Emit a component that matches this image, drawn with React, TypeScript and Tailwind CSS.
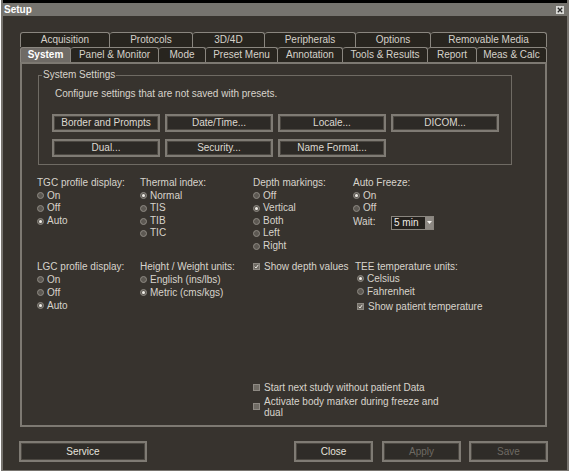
import React from "react";

type TabDef = { label: string; w: string; active?: boolean };

const row1: TabDef[] = [
  { label: "Acquisition", w: "w-[90px]" },
  { label: "Protocols", w: "w-[83px]" },
  { label: "3D/4D", w: "w-[72px]" },
  { label: "Peripherals", w: "w-[91px]" },
  { label: "Options", w: "w-[75px]" },
  { label: "Removable Media", w: "w-[116px]" },
];

const row2: TabDef[] = [
  { label: "System", w: "w-[51px]", active: true },
  { label: "Panel & Monitor", w: "w-[88px]" },
  { label: "Mode", w: "w-[47px]" },
  { label: "Preset Menu", w: "w-[72px]" },
  { label: "Annotation", w: "w-[65px]" },
  { label: "Tools & Results", w: "w-[85px]" },
  { label: "Report", w: "w-[49px]" },
  { label: "Meas & Calc", w: "w-[70px]" },
];

function Tab({ t, first }: { t: TabDef; first: boolean }) {
  return (
    <div
      className={`${t.w} h-[15px] flex items-center justify-center border-t border-r border-[#8a867f] rounded-t-[3px] ${
        first ? "border-l" : ""
      } ${t.active ? "bg-[#6f6b66] text-white font-bold" : "bg-[#28251f] text-[#d6d2ca]"}`}
    >
      {t.label}
    </div>
  );
}

function Radio({ on }: { on?: boolean }) {
  return (
    <span className="inline-flex w-[7px] h-[7px] shrink-0 rounded-full bg-[#5c5852] border border-[#8e8a83] items-center justify-center">
      {on && <span className="w-[3px] h-[3px] rounded-full bg-[#f2efe9]" />}
    </span>
  );
}

function Check({ on }: { on?: boolean }) {
  return (
    <span className="inline-flex w-[7px] h-[7px] shrink-0 bg-[#6f6b64] border border-[#8e8a83] items-center justify-center">
      {on && (
        <svg width="7" height="7" viewBox="0 0 7 7" className="block">
          <path d="M1 3.8 L2.8 5.6 L6 1.2" stroke="#f4f1ec" strokeWidth="1.3" fill="none" />
        </svg>
      )}
    </span>
  );
}

function RItem({ label, on, h = "h-[12.6px]" }: { label: string; on?: boolean; h?: string }) {
  return (
    <div className={`${h} flex items-center gap-[3px]`}>
      <Radio on={on} />
      <span>{label}</span>
    </div>
  );
}

function CItem({ label, on, h = "h-[12.6px]" }: { label: string; on?: boolean; h?: string }) {
  return (
    <div className={`${h} flex items-center gap-[4px]`}>
      <Check on={on} />
      <span className="whitespace-nowrap">{label}</span>
    </div>
  );
}

function Btn({ label }: { label: string }) {
  return (
    <div className="h-[18px] flex items-center justify-center border-2 border-[#7f7b74] bg-[#2d2a26] text-[#ddd9d1] shadow-[inset_0_0_0_1px_#4c4842]">
      {label}
    </div>
  );
}

function BigBtn({ label, w, dim }: { label: string; w: string; dim?: boolean }) {
  return (
    <div
      className={`${w} h-[21px] flex items-center justify-center border-2 border-[#7f7b74] bg-[#2f2c28] shadow-[inset_0_0_0_1px_#4c4842] ${
        dim ? "text-[#6e6a63]" : "text-[#e6e3dd]"
      }`}
    >
      {label}
    </div>
  );
}

export default function App() {
  return (
    <div className="w-[570px] h-[474px] bg-white font-['Liberation_Sans',Arial,sans-serif] text-[10px] text-[#d8d4cc] leading-[12px]">
      <div className="ml-[1px] w-[568px] h-[471px] bg-[#37332e] border-l-2 border-r-2 border-b border-[#77746f] flex flex-col">
        <div className="h-[3px] bg-black shrink-0" />
        <div className="h-[13px] shrink-0 bg-[#76746f] flex items-center justify-between pl-[1px] pr-[3px]">
          <span className="font-bold text-white leading-[13px]">Setup</span>
          <span className="w-[8px] h-[8px] bg-[#d9d9d6] flex items-center justify-center">
            <svg width="6" height="6" viewBox="0 0 6 6" className="block">
              <path d="M0.8 0.8 L5.2 5.2 M5.2 0.8 L0.8 5.2" stroke="#2a2a2a" strokeWidth="1.3" />
            </svg>
          </span>
        </div>

        {/* Tabs */}
        <div className="ml-[17px] mt-[16px] flex">
          {row1.map((t, i) => (
            <Tab key={t.label} t={t} first={i === 0} />
          ))}
        </div>
        <div className="ml-[17px] flex">
          {row2.map((t, i) => (
            <Tab key={t.label} t={t} first={i === 0} />
          ))}
        </div>

        {/* Panel */}
        <div className="ml-[17px] w-[527px] h-[365px] border-2 border-[#7d7972] flex flex-col">
          {/* Group box */}
          <div className="relative ml-[16px] mt-[11px] w-[474px] h-[90px] border border-[#6f6b64]">
            <span className="absolute left-[3px] -top-[7px] px-[1px] bg-[#37332e]">System Settings</span>
            <div className="ml-[16px] mt-[12px]">Configure settings that are not saved with presets.</div>
            <div className="ml-[13px] mt-[14px] grid grid-cols-[repeat(4,108px)] gap-x-[5px] gap-y-[7px]">
              <Btn label="Border and Prompts" />
              <Btn label="Date/Time..." />
              <Btn label="Locale..." />
              <Btn label="DICOM..." />
              <Btn label="Dual..." />
              <Btn label="Security..." />
              <Btn label="Name Format..." />
            </div>
          </div>

          {/* Section 1 */}
          <div className="flex pl-[15px] mt-[12px] leading-[12.6px]">
            <div className="w-[103px]">
              <div className="h-[12.6px]">TGC profile display:</div>
              <RItem label="On" />
              <RItem label="Off" />
              <RItem label="Auto" on />
            </div>
            <div className="w-[113px]">
              <div className="h-[12.6px]">Thermal index:</div>
              <RItem label="Normal" on />
              <RItem label="TIS" />
              <RItem label="TIB" />
              <RItem label="TIC" />
            </div>
            <div className="w-[100px]">
              <div className="h-[12.6px]">Depth markings:</div>
              <RItem label="Off" />
              <RItem label="Vertical" on />
              <RItem label="Both" />
              <RItem label="Left" />
              <RItem label="Right" />
            </div>
            <div>
              <div className="h-[12.6px]">Auto Freeze:</div>
              <RItem label="On" on />
              <RItem label="Off" />
              <div className="flex items-center h-[14px] mt-[1px]">
                <span className="w-[38px]">Wait:</span>
                <div className="flex h-[14px] w-[43px] border border-[#8a867f] bg-[#24211d]">
                  <span className="flex-1 pl-[2px] leading-[12px] text-[#eeebe5]">5 min</span>
                  <span className="w-[8px] bg-[#8d8983] flex items-center justify-center">
                    <svg width="5" height="3" viewBox="0 0 5 3" className="block">
                      <path d="M0 0 L5 0 L2.5 3 Z" fill="#f2f0ec" />
                    </svg>
                  </span>
                </div>
              </div>
            </div>
          </div>

          {/* Section 2 */}
          <div className="flex pl-[15px] mt-[7px] leading-[13px]">
            <div className="w-[103px]">
              <div className="h-[13px]">LGC profile display:</div>
              <RItem label="On" h="h-[13px]" />
              <RItem label="Off" h="h-[13px]" />
              <RItem label="Auto" on h="h-[13px]" />
            </div>
            <div className="w-[113px]">
              <div className="h-[13px]">Height / Weight units:</div>
              <RItem label="English (ins/lbs)" h="h-[13px]" />
              <RItem label="Metric (cms/kgs)" on h="h-[13px]" />
            </div>
            <div className="w-[102px]">
              <CItem label="Show depth values" on h="h-[13px]" />
            </div>
            <div>
              <div className="h-[13px]">TEE temperature units:</div>
              <div className="pl-[2px]">
                <RItem label="Celsius" on h="h-[12.5px]" />
                <RItem label="Fahrenheit" h="h-[12.5px]" />
                <div className="mt-[2px]">
                  <CItem label="Show patient temperature" on h="h-[13px]" />
                </div>
              </div>
            </div>
          </div>

          {/* Bottom checkboxes */}
          <div className="ml-[231px] mt-[69px] leading-[11px]">
            <CItem label="Start next study without patient Data" h="h-[11px]" />
            <div className="mt-[3px] flex items-center gap-[4px]">
              <Check />
              <span className="w-[182px]">Activate body marker during freeze and dual</span>
            </div>
          </div>
        </div>

        {/* Bottom buttons */}
        <div className="flex ml-[16px] mt-[14px]">
          <BigBtn label="Service" w="w-[128px]" />
          <div className="ml-[147px]">
            <BigBtn label="Close" w="w-[79px]" />
          </div>
          <div className="ml-[9px]">
            <BigBtn label="Apply" w="w-[79px]" dim />
          </div>
          <div className="ml-[8px]">
            <BigBtn label="Save" w="w-[79px]" dim />
          </div>
        </div>
      </div>
    </div>
  );
}
